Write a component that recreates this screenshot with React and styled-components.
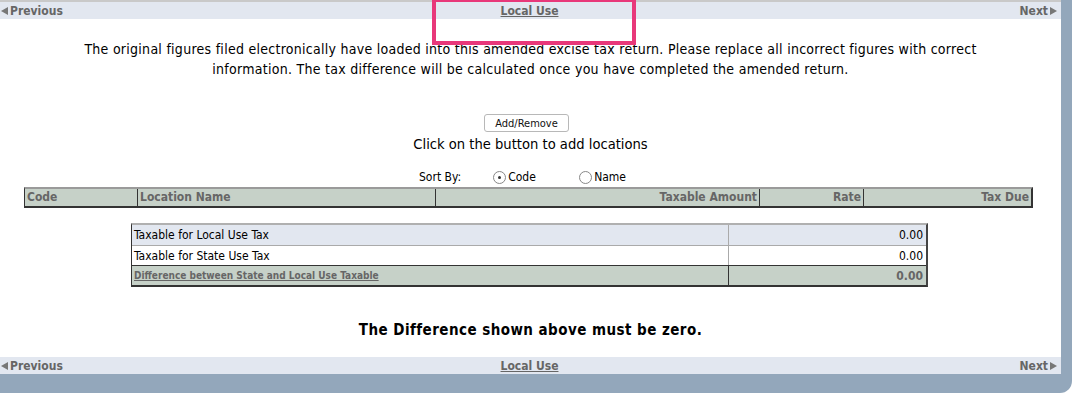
import styled, { createGlobalStyle } from "styled-components";

const GlobalStyle = createGlobalStyle`
  body {
    margin: 0;
    background: #ffffff;
    font-family: "DejaVu Sans Condensed", "DejaVu Sans", sans-serif;
  }
`;

const Frame = styled.div`
  position: relative;
  width: 1072px;
  height: 393px;
  box-sizing: border-box;
  padding: 0 11px 19px 0;
  background: #93a7bb;
  border-bottom-right-radius: 12px;
`;

const Panel = styled.div`
  height: 100%;
  display: flex;
  flex-direction: column;
  background: #ffffff;
  border-top: 2px solid #c9c9c9;
  box-sizing: border-box;
`;

const NavBar = styled.div`
  height: 17px;
  display: grid;
  grid-template-columns: 1fr auto 1fr;
  align-items: center;
  background: #e2e7f0;
  font-size: 12px;
  font-weight: bold;
  color: #666666;
  margin-top: ${(p) => (p.$bottom ? "auto" : "0")};
`;

const NavLink = styled.span`
  display: flex;
  align-items: center;
  justify-content: ${(p) => (p.$right ? "flex-end" : "flex-start")};
  padding-right: ${(p) => (p.$right ? "4px" : "0")};
  padding-left: ${(p) => (p.$right ? "0" : "1px")};
`;

const Arrow = styled.span`
  width: 0;
  height: 0;
  border-top: 4.5px solid transparent;
  border-bottom: 4.5px solid transparent;
  ${(p) =>
    p.$right
      ? "border-left: 7px solid #777; margin-left: 2px;"
      : "border-right: 7px solid #777; margin-right: 2px;"}
`;

const Title = styled.span`
  text-decoration: underline;
  margin-right: 2px;
`;

const Intro = styled.p`
  width: 930px;
  margin: 20px auto 0;
  text-align: center;
  font-size: 14px;
  letter-spacing: 0.27px;
  line-height: 20px;
  color: #000;
`;

const Center = styled.div`
  display: flex;
  flex-direction: column;
  align-items: center;
  margin-top: ${(p) => p.$top || "0"};
`;

const SmallButton = styled.button`
  height: 18px;
  padding: 0 10px;
  font-family: inherit;
  font-size: 11px;
  background: #ffffff;
  border: 1px solid #b8b8b8;
  border-radius: 3px;
  color: #111;
  margin-right: 8px;
`;

const Hint = styled.div`
  font-size: 14.6px;
  line-height: 20px;
  margin-top: 2px;
`;

const SortRow = styled.div`
  align-self: flex-start;
  display: flex;
  align-items: center;
  font-size: 12px;
  height: 16px;
  margin-top: 15px;
  margin-left: 419px;
`;

const SortLabel = styled.span`
  margin-right: 32px;
`;

const RadioItem = styled.label`
  display: flex;
  align-items: center;
  width: ${(p) => p.$w || "auto"};
`;

const Radio = styled.span`
  width: 11px;
  height: 11px;
  border: 1px solid #888;
  border-radius: 50%;
  display: flex;
  align-items: center;
  justify-content: center;
  margin-right: 2px;
  background: #fff;
  &::after {
    content: "";
    width: 3px;
    height: 3px;
    border-radius: 50%;
    background: ${(p) => (p.$on ? "#333" : "transparent")};
  }
`;

const HeadTable = styled.div`
  display: grid;
  grid-template-columns: 112px 298px 324px 104px 1fr;
  width: 1009px;
  margin: 2px 0 0 24px;
  background: #c6d1c8;
  border-top: 2px solid #9a9a9a;
  border-bottom: 2px solid #333;
  border-left: 1px solid #333;
  border-right: 2px solid #333;
  box-sizing: border-box;
`;

const HeadCell = styled.div`
  height: 17px;
  line-height: 17px;
  font-size: 12px;
  font-weight: bold;
  color: #666;
  padding: 0 2px;
  text-align: ${(p) => (p.$right ? "right" : "left")};
  border-left: ${(p) => (p.$first ? "none" : "1px solid #333")};
`;

const SumTable = styled.div`
  width: 797px;
  margin: 15px 0 0 131px;
  border-top: 2px solid #b0b0b0;
  border-left: 1px solid #333;
  border-right: 2px solid #444;
  border-bottom: 2px solid #333;
  box-sizing: border-box;
`;

const SumRow = styled.div`
  display: grid;
  grid-template-columns: 596px 1fr;
  height: 20px;
  background: ${(p) => p.$bg || "#fff"};
  border-top: ${(p) => (p.$dark ? "1px solid #333" : p.$first ? "none" : "1px solid #aaa")};
  box-sizing: border-box;
`;

const SumCell = styled.div`
  display: flex;
  align-items: center;
  justify-content: ${(p) => (p.$right ? "flex-end" : "flex-start")};
  padding: 0 3px 0 2px;
  font-size: 12px;
  color: #000;
  border-left: ${(p) => (p.$right ? `1px solid ${p.$dark ? "#333" : "#aaa"}` : "none")};
`;

const TotalLabel = styled.span`
  font-size: 10px;
  font-weight: bold;
  color: #666;
  text-decoration: underline;
`;

const TotalValue = styled.span`
  font-weight: bold;
  color: #666;
`;

const Notice = styled.div`
  text-align: center;
  font-size: 15px;
  letter-spacing: 0.45px;
  font-weight: bold;
  margin-top: 34px;
`;

const Highlight = styled.div`
  position: absolute;
  left: 432px;
  top: -2px;
  width: 204px;
  height: 47px;
  border: 4px solid #e8387a;
  box-sizing: border-box;
  pointer-events: none;
`;

function Nav({ bottom }) {
  return (
    <NavBar $bottom={bottom}>
      <NavLink>
        <Arrow />
        Previous
      </NavLink>
      <Title>Local Use</Title>
      <NavLink $right>
        Next
        <Arrow $right />
      </NavLink>
    </NavBar>
  );
}

export default function App() {
  return (
    <>
      <GlobalStyle />
      <Frame>
        <Panel>
          <Nav />
          <Intro>
            The original figures filed electronically have loaded into this amended excise tax
            return. Please replace all incorrect figures with correct information. The tax
            difference will be calculated once you have completed the amended return.
          </Intro>
          <Center $top="35px">
            <SmallButton>Add/Remove</SmallButton>
            <Hint>Click on the button to add locations</Hint>
            <SortRow>
              <SortLabel>Sort By:</SortLabel>
              <RadioItem $w="86px">
                <Radio $on />
                Code
              </RadioItem>
              <RadioItem>
                <Radio />
                Name
              </RadioItem>
            </SortRow>
          </Center>
          <HeadTable>
            <HeadCell $first>Code</HeadCell>
            <HeadCell>Location Name</HeadCell>
            <HeadCell $right>Taxable Amount</HeadCell>
            <HeadCell $right>Rate</HeadCell>
            <HeadCell $right>Tax Due</HeadCell>
          </HeadTable>
          <SumTable>
            <SumRow $first $bg="#e2e7f0">
              <SumCell>Taxable for Local Use Tax</SumCell>
              <SumCell $right>0.00</SumCell>
            </SumRow>
            <SumRow>
              <SumCell>Taxable for State Use Tax</SumCell>
              <SumCell $right>0.00</SumCell>
            </SumRow>
            <SumRow $dark $bg="#c6d1c8">
              <SumCell>
                <TotalLabel>Difference between State and Local Use Taxable</TotalLabel>
              </SumCell>
              <SumCell $right $dark>
                <TotalValue>0.00</TotalValue>
              </SumCell>
            </SumRow>
          </SumTable>
          <Notice>The Difference shown above must be zero.</Notice>
          <Nav bottom />
        </Panel>
        <Highlight />
      </Frame>
    </>
  );
}
